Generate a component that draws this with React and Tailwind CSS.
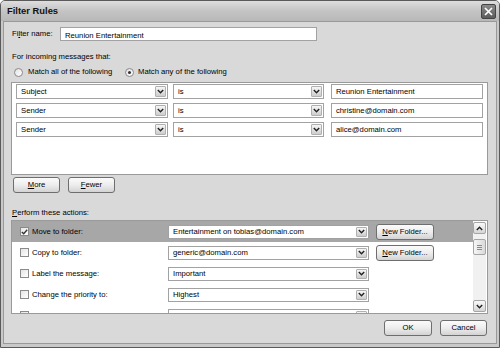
import React from 'react';

const Chevron = ({ up = false }) => (
    <svg width="7" height="5" viewBox="0 0 7 5" className={up ? 'rotate-180' : ''}>
        <path d="M0.8 1 L3.5 3.8 L6.2 1" fill="none" stroke="#222" strokeWidth="1.4" />
    </svg>
);

const Select = ({ className = '', value }) => (
    <div className={`flex items-stretch bg-white border border-[#a2a2a2] p-[1px] ${className}`}>
        <span className="flex-1 flex items-center pl-[3px] whitespace-nowrap overflow-hidden">{value}</span>
        <div className="w-[11px] border border-[#b0b0b0] rounded-[1px] bg-gradient-to-b from-[#f6f6f6] to-[#cdcdcd] flex items-center justify-center">
            <Chevron />
        </div>
    </div>
);

const TextField = ({ className = '', value }) => (
    <div className={`bg-white border border-[#a2a2a2] pl-[4px] pt-[1px] whitespace-nowrap overflow-hidden ${className}`}>
        {value}
    </div>
);

const Btn = ({ className = '', children }) => (
    <button className={`rounded-[3px] border border-[#6e6e6e] bg-gradient-to-b from-[#fbfbfb] via-[#ededed] to-[#d3d3d3] text-black flex items-center justify-center leading-none ${className}`}>
        {children}
    </button>
);

const Checkbox = ({ checked }) => (
    <div className="w-[9px] h-[9px] shrink-0 border border-[#8a8a8a] bg-gradient-to-br from-[#e4e4e4] to-white flex items-center justify-center">
        {checked && (
            <svg width="7" height="6" viewBox="0 0 7 6">
                <path d="M0.8 3 L2.7 4.8 L6.2 0.8" fill="none" stroke="#333" strokeWidth="1.3" />
            </svg>
        )}
    </div>
);

const Radio = ({ checked }) => (
    <div className="w-[9px] h-[9px] shrink-0 rounded-full border border-[#8a8a8a] bg-gradient-to-br from-[#e2e2e2] to-white flex items-center justify-center">
        {checked && <div className="w-[3px] h-[3px] rounded-full bg-[#333]" />}
    </div>
);

const conditions = [
    { field: 'Subject', op: 'is', value: 'Reunion Entertainment' },
    { field: 'Sender', op: 'is', value: 'christine@domain.com' },
    { field: 'Sender', op: 'is', value: 'alice@domain.com' },
];

const actions = [
    { label: 'Move to folder:', value: 'Entertainment on tobias@domain.com', checked: true, folder: true },
    { label: 'Copy to folder:', value: 'generic@domain.com', folder: true },
    { label: 'Label the message:', value: 'Important' },
    { label: 'Change the priority to:', value: 'Highest' },
    { label: 'Set Junk Status to:', value: 'Spam' },
];

export default function App() {
    return (
        <div className="w-[500px] h-[348px] flex flex-col rounded-t-[5px] border border-[#5a5a5a] bg-[#c9c9c9] font-['Liberation_Sans',Arial,sans-serif] text-[7.7px] text-black overflow-hidden">
            {/* Title bar */}
            <div className="h-[20px] shrink-0 flex items-center pl-[6px] pr-[3px] bg-gradient-to-b from-[#dedede] via-[#c4c4c4] to-[#b8b8b8]">
                <span className="font-bold text-[9.4px] text-[#111]">Filter Rules</span>
                <div className="ml-auto w-[15px] h-[15px] rounded-[2px] border border-[#444] bg-gradient-to-b from-[#8a8a8a] to-[#5c5c5c] flex items-center justify-center">
                    <svg width="9" height="9" viewBox="0 0 9 9">
                        <path d="M1 1 L8 8 M8 1 L1 8" stroke="#fff" strokeWidth="1.7" />
                    </svg>
                </div>
            </div>

            {/* Body */}
            <div className="flex-1 px-[2px] pb-[3px]">
                <div className="h-full border border-[#999] bg-[#d9d9d9] pl-[7px] pr-[8px] pt-[5px] flex flex-col">
                    <div className="h-[14px] flex items-center">
                        <span className="ml-[1px] w-[48px]">Fi<span className="underline">l</span>ter name:</span>
                        <TextField className="w-[257px] h-[14px] pt-[2px]" value="Reunion Entertainment" />
                    </div>

                    <div className="mt-[11px] h-[10px] ml-[1px] flex items-center">For incoming messages that:</div>

                    <div className="mt-[5px] h-[10px] flex items-center">
                        <div className="ml-[3px] w-[111px] flex items-center">
                            <Radio />
                            <span className="ml-[5px]">Match all of the following</span>
                        </div>
                        <Radio checked />
                        <span className="ml-[4px]">Match any of the following</span>
                    </div>

                    {/* Conditions */}
                    <div className="mt-[5px] h-[93px] shrink-0 bg-white border border-[#9a9a9a] pt-[1px] px-[4px] flex flex-col gap-[4px]">
                        {conditions.map((c, i) => (
                            <div key={i} className="h-[15px] flex">
                                <Select className="w-[152px]" value={c.field} />
                                <Select className="ml-[5px] w-[151px]" value={c.op} />
                                <TextField className="ml-[7px] w-[152px]" value={c.value} />
                            </div>
                        ))}
                    </div>

                    <div className="mt-[2px] h-[16px] flex gap-[8px] pl-[2px]">
                        <Btn className="w-[47px] h-[16px]"><span className="underline">M</span>ore</Btn>
                        <Btn className="w-[47px] h-[16px]"><span className="underline">F</span>ewer</Btn>
                    </div>

                    <div className="mt-[15px] h-[10px] ml-[1px] flex items-center">
                        <span className="underline">P</span>erform these actions:
                    </div>

                    {/* Actions */}
                    <div className="mt-[2px] h-[94px] shrink-0 bg-white border border-[#9a9a9a] flex">
                        <div className="flex-1 overflow-hidden flex flex-col">
                            {actions.map((a, i) => (
                                <div key={i} className={`h-[21px] shrink-0 flex items-center pl-[8px] ${i === 0 ? 'bg-[#a7a7a7]' : ''}`}>
                                    <Checkbox checked={a.checked} />
                                    <span className="ml-[3px] w-[136px] whitespace-nowrap">{a.label}</span>
                                    <Select className="w-[201px] h-[14px]" value={a.value} />
                                    {a.folder && (
                                        <Btn className="ml-[7px] w-[58px] h-[16px]"><span className="underline">N</span>ew Folder...</Btn>
                                    )}
                                </div>
                            ))}
                        </div>
                        {/* Scrollbar */}
                        <div className="w-[13px] my-[1px] mr-[1px] bg-[#f1f1f1] flex flex-col">
                            <div className="h-[12px] rounded-[2px] border border-[#a5a5a5] bg-gradient-to-b from-[#fafafa] to-[#d6d6d6] flex items-center justify-center">
                                <Chevron up />
                            </div>
                            <div className="flex-1 pt-[5px]">
                                <div className="h-[16px] rounded-[2px] border border-[#a5a5a5] bg-gradient-to-r from-[#f6f6f6] to-[#dadada] flex flex-col items-center justify-center gap-[1px]">
                                    <div className="w-[5px] h-px bg-[#8a8a8a]" />
                                    <div className="w-[5px] h-px bg-[#8a8a8a]" />
                                    <div className="w-[5px] h-px bg-[#8a8a8a]" />
                                </div>
                            </div>
                            <div className="h-[12px] rounded-[2px] border border-[#a5a5a5] bg-gradient-to-b from-[#fafafa] to-[#d6d6d6] flex items-center justify-center">
                                <Chevron />
                            </div>
                        </div>
                    </div>

                    <div className="mt-[6px] h-[16px] flex justify-end gap-[8px] pr-[1px]">
                        <Btn className="w-[48px] h-[16px]">OK</Btn>
                        <Btn className="w-[47px] h-[16px]">Cancel</Btn>
                    </div>
                </div>
            </div>
        </div>
    );
}
